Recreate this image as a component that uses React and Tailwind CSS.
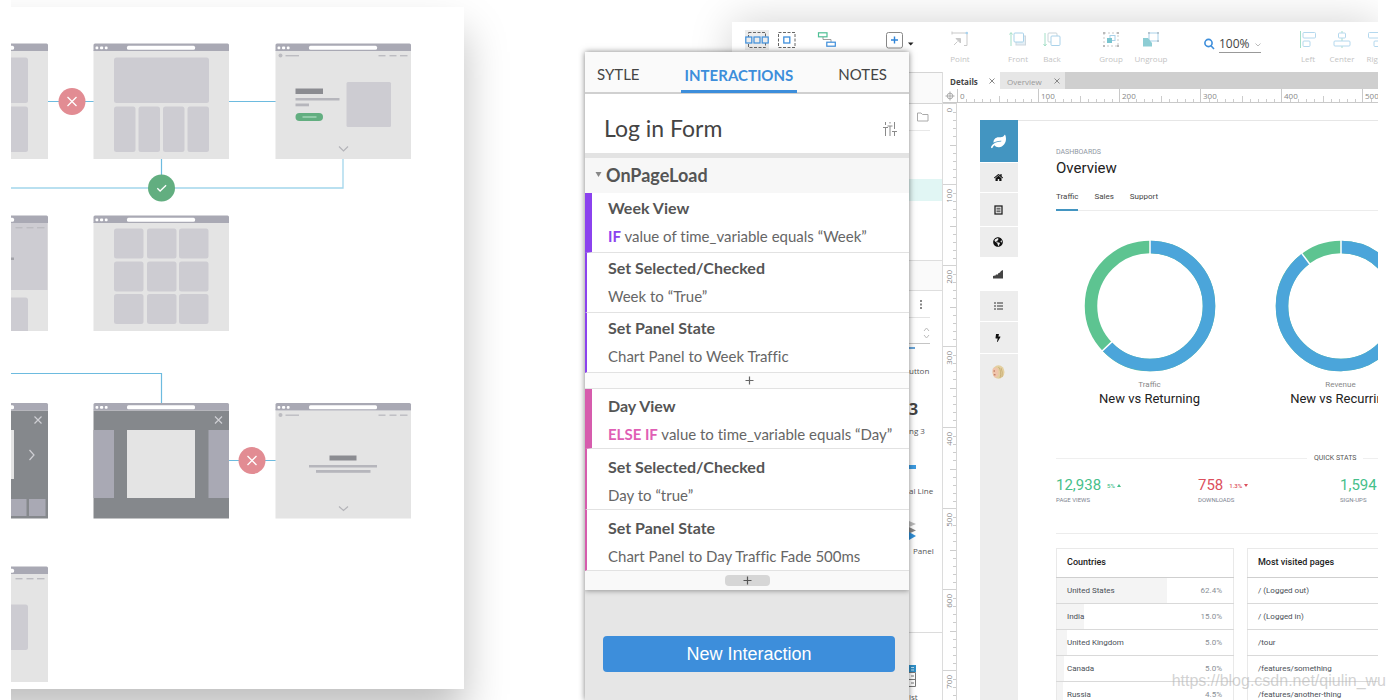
import React from "react";
import { FaLeaf, FaHome, FaGlobeAmericas, FaBolt } from "react-icons/fa";

/* ---------- Site flow diagram ---------- */

const BAR = "#a9a9b4";
const BLOCK = "#cdccd2";
const LINE = "#6dbbdf";

function Frame({ x, y, dark, children }) {
  return (
    <g transform={`translate(${x} ${y})`}>
      <path d="M0 7V1.5Q0 0 1.5 0H134Q135.500 0 135.500 1.500V7Z" fill={BAR} />
      <rect y="7.500" width="135.500" height="108" fill={dark ? "#85888c" : "#e4e4e4"} />
      <rect y="6.500" width="135.500" height="1" fill={BAR} />
      <rect x="2" y="3" width="2.800" height="2.800" rx="1" fill="#fff" />
      <rect x="6.500" y="3" width="3.200" height="2.800" rx="1" fill="#fff" />
      <rect x="11.300" y="3" width="2.800" height="2.800" rx="1" fill="#fff" />
      <rect x="33.500" y="2.200" width="68" height="4" rx="1.500" fill="#fff" />
      {children}
    </g>
  );
}

function Block({ x, y, w, h, fill = BLOCK, r = 2.5 }) {
  return <rect x={x} y={y} width={w} height={h} rx={r} fill={fill} />;
}

function NavLines({ brand }) {
  return (
    <g fill="#bcbcc1">
      {brand && <circle cx="5" cy="12" r="2" />}
      {brand && <rect x="10" y="11.500" width="13.500" height="1.400" />}
      <rect x="103" y="11.500" width="7" height="1.400" />
      <rect x="114" y="11.500" width="7" height="1.400" />
      <rect x="124.500" y="11.500" width="7.500" height="1.400" />
    </g>
  );
}

function Mark({ cx, cy, ok }) {
  return (
    <g transform={`translate(${cx} ${cy})`}>
      <circle r="13.500" fill={ok ? "#62ae80" : "#e28c93"} />
      <path
        d={ok ? "M-4.200 .300L-1.400 3L4.600-2.800" : "M-4.500-4.500L4.500 4.500M4.500-4.500L-4.500 4.500"}
        stroke="#fff"
        strokeWidth="1.300"
        fill="none"
      />
    </g>
  );
}

function FlowDiagram() {
  const cols = [20.5, 53.5, 85.5];
  const rows = [13, 46, 78.5];
  return (
    <svg width="513" height="682" viewBox="-49 7 513 682" role="img" aria-label="Site flow" className="block">
      <g fill="none" stroke={LINE} strokeWidth="1.200">
        <path d="M48 101.500H94M229 101.500H276M161.500 158V188" />
        <path d="M11 188H343V158" stroke="#a3d6ec" strokeWidth="1.300" />
        <path d="M11 373.500H161.500V404M229 460.500H276" />
      </g>

      <Frame x={-87.5} y={43.5}>
        <Block x={20} y={14} w={95.5} h={45.5} />
        <Block x={20} y={63} w={95.5} h={45.5} />
      </Frame>
      <Frame x={93.5} y={43.5}>
        <Block x={20.5} y={14} w={95} h={45.5} />
        <Block x={20.5} y={63} w={21.5} h={45.5} />
        <Block x={45} y={63} w={21.5} h={45.5} />
        <Block x={69.5} y={63} w={21.5} h={45.5} />
        <Block x={94} y={63} w={21.5} h={45.5} />
      </Frame>
      <Frame x={275.5} y={43.5}>
        <NavLines brand />
        <Block x={20} y={45} w={27.5} h={5.5} r={0} fill="#8b8c91" />
        <Block x={20} y={54.500} w={44} h={2.5} r={0} fill="#b6b6bc" />
        <Block x={20} y={60} w={13.5} h={2.8} r={0} fill="#b6b6bc" />
        <Block x={20} y={69.500} w={27.5} h={8} r={4} fill="#62ae80" />
        <Block x={27} y={72.800} w={14} h={1.4} r={0} fill="#a5d8b9" />
        <Block x={71} y={38.500} w={44.500} h={45} r={1.5} />
        <path d="M63.500 103L68 107.500L72.500 103" fill="none" stroke="#b4b4b9" strokeWidth="1.200" />
      </Frame>

      <Frame x={-87.5} y={215.5}>
        <Block x={0} y={7.5} w={135} h={67} r={0} />
        <NavLines />
        <Block x={70} y={42} w={31.5} h={2.5} r={0} fill="#a2a2a8" />
        <path d="M20 115.500V84Q20 82 22 82H113Q115.500 82 115.500 84.500V115.500Z" fill={BLOCK} />
      </Frame>
      <Frame x={93.5} y={215.5}>
        {rows.map((y) => cols.map((x) => <Block key={`${x}-${y}`} x={x} y={y} w={29.5} h={30} />))}
      </Frame>

      <Frame x={-87.5} y={403} dark>
        <Block x={33.500} y={27} w={68} h={49} r={0} fill="#e4e4e4" />
        <Block x={92} y={96} w={22} h={17} r={0} fill={BAR} />
        <Block x={116.500} y={96} w={16.500} h={17} r={0} fill={BAR} />
        <path d="M122 13.500L129 20.500M129 13.500L122 20.500M117 47L121.500 52L117 57" fill="none" stroke="#cfcfd4" strokeWidth="1.200" />
      </Frame>
      <Frame x={93.5} y={403} dark>
        <Block x={0} y={27} w={20.500} h={68} r={0} fill={BAR} />
        <Block x={33.500} y={27} w={68} h={68} r={0} fill="#e4e4e4" />
        <Block x={115} y={27} w={20.500} h={68} r={0} fill={BAR} />
        <path d="M121.500 13.500L128.500 20.500M128.500 13.500L121.500 20.500" stroke="#cfcfd4" strokeWidth="1.200" />
      </Frame>
      <Frame x={275.5} y={403}>
        <NavLines brand />
        <Block x={54} y={52.500} w={27} h={5} r={0} fill="#8b8c91" />
        <Block x={33.500} y={62} w={68} h={2.5} r={0} fill="#b6b6bc" />
        <Block x={40.500} y={67} w={54.500} h={2.8} r={0} fill="#b6b6bc" />
        <path d="M63.500 103.500L68 107.500L72.500 103.500" fill="none" stroke="#b4b4b9" strokeWidth="1.200" />
      </Frame>

      <Frame x={-87.5} y={566.5}>
        <NavLines />
        <Block x={20} y={38} w={95.5} h={45.5} />
      </Frame>

      <Mark cx={72} cy={101.500} />
      <Mark cx={161.500} cy={188} ok />
      <Mark cx={252} cy={460.500} />
    </svg>
  );
}

/* ---------- Design tool: toolbar ---------- */

function ToolButton({ label, children, wide }) {
  return (
    <button
      className={`flex shrink-0 flex-col items-center gap-[7px] text-[8px] leading-[8px] text-[#c4c4c4] ${wide ? "w-10" : "w-[34px]"}`}
    >
      <svg width="20" height="18" viewBox="0 0 20 18" fill="none" strokeWidth="1" aria-hidden="true">
        {children}
      </svg>
      {label}
    </button>
  );
}

function Toolbar() {
  return (
    <div className="flex h-[50px] shrink-0 items-start overflow-hidden bg-white pl-[13px] pt-2">
      <button aria-label="Select intersecting" className="shrink-0 bg-[#ececec]">
        <svg width="24" height="20" viewBox="0 0 24 20" fill="none">
          <rect x="3.500" y="2.500" width="17" height="15" stroke="#666" strokeDasharray="3 1.500" />
          <g stroke="#3d8edb" fill="#ececec" strokeWidth="1.200">
            <rect x=".800" y="7" width="6" height="6" />
            <rect x="9" y="7" width="6" height="6" />
            <rect x="17.200" y="7" width="6" height="6" />
          </g>
        </svg>
      </button>
      <button aria-label="Select contained" className="ml-2 shrink-0">
        <svg width="20" height="20" viewBox="0 0 20 20" fill="none">
          <rect x="1.500" y="2.500" width="16.500" height="15" stroke="#666" strokeDasharray="3 1.500" />
          <rect x="6.800" y="7" width="6" height="6" stroke="#3d8edb" strokeWidth="1.300" />
        </svg>
      </button>
      <button aria-label="Connect" className="ml-5 shrink-0">
        <svg width="20" height="20" viewBox="0 0 20 20" fill="none">
          <rect x="1.500" y="2.800" width="8.500" height="4" stroke="#4fbf95" strokeWidth="1.200" />
          <path d="M6 7V9.500H14V12" stroke="#888" strokeWidth=".800" />
          <rect x="9.800" y="12.200" width="8.500" height="4" stroke="#3d8edb" strokeWidth="1.200" />
        </svg>
      </button>
      <button aria-label="Insert" className="ml-12 flex shrink-0 items-center gap-[3px]">
        <svg width="20" height="20" viewBox="0 0 20 20" fill="none">
          <rect x="1.500" y="2.500" width="16" height="15.500" rx="2" stroke="#888" />
          <path d="M6 10H13M9.500 6.500V13.500" stroke="#2f84d8" strokeWidth="1.400" />
        </svg>
        <svg width="6" height="12" viewBox="0 0 6 12">
          <path d="M0 8.500H5.500L2.700 11.500Z" fill="#222" />
        </svg>
      </button>
      <div className="flex pl-[29px]">
        <ToolButton label="Point">
          <path d="M2 3H17M17 3V15.500H14M2 1.500V4.500" stroke="#c9c9c9" />
          <path d="M4 15L7.500 11.500M6 8.500H10.500V13Z" fill="#c9c9c9" stroke="#c9c9c9" />
          <circle cx="16.800" cy="3" r="1.300" fill="#a8d3f0" />
        </ToolButton>
      </div>
      <div className="flex pl-6">
        <ToolButton label="Front">
          <path d="M3 16V3M1.500 4.500L3 2.500L4.500 4.500" stroke="#a5dfc8" />
          <rect x="8" y="6" width="9.500" height="9" fill="#e3eef5" stroke="#cfd8de" />
          <rect x="6" y="3" width="9.500" height="9" rx="1" fill="#fff" stroke="#a9d2ea" />
        </ToolButton>
        <ToolButton label="Back">
          <path d="M3 3V16M1.500 14L3 16L4.500 14" stroke="#a5dfc8" />
          <rect x="6" y="3" width="9" height="9" rx="1" stroke="#c9d3d8" />
          <rect x="9" y="6" width="9" height="9.500" rx="1" fill="#fff" stroke="#a9d2ea" />
        </ToolButton>
      </div>
      <div className="flex pl-[22px]">
        <ToolButton label="Group" wide>
          <rect x="3" y="3" width="14" height="13" stroke="#c9c9c9" strokeDasharray="2 2" />
          <path d="M2 2H4V4H2ZM16 2H18V4H16ZM2 15H4V17H2ZM16 15H18V17H16Z" fill="#bbb" />
          <rect x="9" y="5.500" width="5" height="5" stroke="#a9d2ea" />
          <rect x="6" y="8" width="5" height="5" fill="#79c5cf" />
        </ToolButton>
        <ToolButton label="Ungroup" wide>
          <rect x="8" y="3" width="9" height="8" stroke="#a9d2ea" />
          <path d="M2 8L7 8L11 13V16.500H2Z" fill="#8dcdd4" />
          <path d="M7 2H9V4H7ZM16 2H18V4H16ZM16 10H18V12H16Z" fill="#b5c5d0" />
        </ToolButton>
      </div>
      <div className="flex shrink-0 items-center pl-8 pt-[5px]">
        <svg width="12" height="12" viewBox="0 0 12 12" fill="none" stroke="#3d8edb" strokeWidth="1.600" className="mr-1">
          <circle cx="5.500" cy="5" r="3.600" />
          <path d="M8 7.800L11 11" />
        </svg>
        <div className="relative flex items-center border-b border-[#999]">
          <select
            aria-label="Zoom"
            className="w-[42px] appearance-none bg-transparent text-[12px] leading-[17px] text-[#444]"
            defaultValue="100"
          >
            <option value="100">100%</option>
          </select>
          <svg width="6" height="4" viewBox="0 0 6 4" fill="none" stroke="#bbb" className="pointer-events-none absolute right-0 top-2">
            <path d="M.500 .500L3 3L5.500 .500" />
          </svg>
        </div>
      </div>
      <div className="flex shrink-0 pl-[30px]">
        <ToolButton label="Left">
          <path d="M2.500 1V18" stroke="#a5dfc8" />
          <rect x="5" y="2.500" width="12.500" height="5.500" rx="1" stroke="#b4d8ee" />
          <rect x="5" y="11" width="7" height="5.500" rx="1" stroke="#b4d8ee" />
        </ToolButton>
        <ToolButton label="Center">
          <path d="M10 1V18" stroke="#a5dfc8" />
          <rect x="6.500" y="3" width="7" height="5" rx="1" fill="#fff" stroke="#b4d8ee" />
          <rect x="2" y="11" width="16" height="5" rx="1" fill="#fff" stroke="#b4d8ee" />
        </ToolButton>
        <ToolButton label="Right">
          <rect x="2.500" y="2.500" width="14" height="5.500" rx="1" stroke="#b4d8ee" />
          <rect x="8" y="11" width="8" height="5.500" rx="1" stroke="#b4d8ee" />
        </ToolButton>
      </div>
    </div>
  );
}

/* ---------- Design tool: left sidebar ---------- */

function Sidebar() {
  return (
    <aside className="flex w-[211px] shrink-0 flex-col overflow-hidden border-r border-[#dcdcdc] bg-white pl-[177px] text-[8px] leading-3 text-[#555]">
      <div className="h-8 shrink-0 border-b border-t border-[#d5d5d5] bg-[#fafafa]" />
      <div className="mr-3 flex h-[27px] shrink-0 items-center border-b border-[#e8e8e8] pl-2">
        <svg width="12" height="10" viewBox="0 0 12 10" fill="none" stroke="#aaa">
          <path d="M.500 9V1H4L5.500 2.500H11V9Z" />
        </svg>
      </div>
      <div className="mt-12 h-[22px] shrink-0 bg-[#e1f6f4]" />
      <div className="mt-[59px] h-[31px] shrink-0 border-b border-t border-[#dedede] bg-[#fafafa]" />
      <div className="mr-3 flex h-[27px] shrink-0 items-center justify-center border-b border-[#e4e4e4] pl-1">
        <svg width="3" height="9" viewBox="0 0 3 9" fill="#888">
          <path d="M0 0H2V2H0ZM0 3.500H2V5.500H0ZM0 7H2V9H0Z" />
        </svg>
      </div>
      <div className="mr-3 flex h-[26px] shrink-0 items-center justify-end border-b border-[#c5c5c5] pt-1">
        <svg width="7" height="12" viewBox="0 0 7 12" fill="none" stroke="#bbb">
          <path d="M1 4L3.500 1L6 4M1 8L3.500 11L6 8" />
        </svg>
      </div>
      <div className="mt-[3px] h-[2px] w-[6px] shrink-0 bg-[#6aa5d8]" />
      <div className="mt-4">utton</div>
      <div className="mt-5 text-[16px] font-bold leading-6 text-[#444]">3</div>
      <div className="mt-1">ng 3</div>
      <div className="mt-7 h-1 w-[7px] shrink-0 bg-[#3d9be0]" />
      <div className="mt-4">al Line</div>
      <svg width="8" height="20" viewBox="0 0 8 20" className="mt-6 shrink-0">
        <path d="M0 0L7 3L0 6Z" fill="#bbb" />
        <path d="M0 6L7 9.500L0 12.500Z" fill="#888" />
        <path d="M0 11L7 15L0 19Z" fill="#3090d8" />
      </svg>
      <div className="mt-1 pl-1">Panel</div>
      <div className="mt-[75px] border-t border-[#dcdcdc] pt-8">
        <svg width="8" height="22" viewBox="0 0 8 22" fill="none">
          <path d="M0 0H7V7H0Z" fill="#3090c8" />
          <path d="M2 2.500H5M2 5H5" stroke="#bfe0f2" />
          <path d="M0 7.500H6.500V21.500H0M0 14.500H6.500M2 11H5M2 18H5" stroke="#777" />
        </svg>
        <div className="mt-1">ist</div>
      </div>
    </aside>
  );
}

/* ---------- Design tool: rulers ---------- */

const TICKS = [8, 16, 24, 32, 41, 49, 57, 65, 73];

function RulerX() {
  return (
    <div className="flex h-[14px] shrink-0 overflow-hidden border-b border-[#c9c9c9] bg-white text-[8px] leading-[14px] text-[#888]">
      <svg width="14" height="13" viewBox="0 0 14 13" fill="none" stroke="#aaa" className="shrink-0">
        <circle cx="7" cy="7" r="2.800" />
        <path d="M7 2.500V11.500M2.500 7H11.500" />
      </svg>
      {[0, 100, 200, 300, 400, 500].map((n) => (
        <div key={n} className="relative w-[81px] shrink-0 border-l border-[#c9c9c9] pl-[2px]">
          {n}
          <svg width="81" height="13" viewBox="0 0 81 13" className="absolute left-0 top-0" stroke="#ccc">
            {TICKS.map((t) => (
              <path key={t} d={`M${t}.5 ${t === 41 ? 7 : 10}V13`} />
            ))}
          </svg>
        </div>
      ))}
    </div>
  );
}

function RulerY() {
  return (
    <div className="flex w-[14px] shrink-0 flex-col overflow-hidden border-r border-[#d6d6d6] bg-white text-[8px] leading-[12px] text-[#888]">
      {[0, 100, 200, 300, 400, 500, 600, 700].map((n) => (
        <div key={n} className="relative h-[81px] shrink-0 border-t border-[#d3d3d3] pt-1">
          <span className="block rotate-180 [writing-mode:vertical-rl]">{n}</span>
          <svg width="13" height="81" viewBox="0 0 13 81" className="absolute left-0 top-0" stroke="#ccc">
            {TICKS.map((t) => (
              <path key={t} d={`M${t === 41 ? 7 : 10} ${t}.5H13`} />
            ))}
          </svg>
        </div>
      ))}
    </div>
  );
}

/* ---------- Dashboard page on the canvas ---------- */

function DashboardNav() {
  const cell = "flex w-full shrink-0 items-center justify-center border-b border-white pr-[2px] text-[#111]";
  return (
    <nav aria-label="Dashboard" className="flex w-[38px] shrink-0 flex-col bg-[#ededed]">
      <a href="#logo" aria-label="Logo" className={`${cell} h-[43px] bg-[#4395c1]`}>
        <FaLeaf size={15} color="#fff" />
      </a>
      <a href="#home" aria-label="Home" className={`${cell} h-[30px]`}>
        <FaHome size={9} />
      </a>
      <a href="#reports" aria-label="Reports" className={`${cell} h-[34px]`}>
        <svg width="9" height="10" viewBox="0 0 9 10" fill="none" stroke="#222">
          <rect x="1" y="1" width="7" height="8" strokeWidth="1.300" />
          <path d="M2.500 3.300H6.500M2.500 5H6.500M2.500 6.700H6.500" strokeWidth=".800" />
        </svg>
      </a>
      <a href="#world" aria-label="World" className={`${cell} h-[31px]`}>
        <FaGlobeAmericas size={10} />
      </a>
      <a href="#stats" aria-label="Stats" className={`${cell} h-[33px] bg-white`}>
        <svg width="10" height="9" viewBox="0 0 10 9" fill="#444">
          <path d="M0 8.500V6L2 5.500V6L3 4.500H5V3.500L7 2.500L8 1L10 0V8.500Z" />
        </svg>
      </a>
      <a href="#list" aria-label="List" className={`${cell} h-[31px]`}>
        <svg width="9" height="8" viewBox="0 0 9 8" stroke="#333">
          <path d="M0 1H2M3 1H9M0 4H2M3 4H9M0 7H2M3 7H9" />
        </svg>
      </a>
      <a href="#activity" aria-label="Activity" className={`${cell} h-8`}>
        <FaBolt size={8} />
      </a>
      <a href="#profile" aria-label="Profile" className="flex h-9 shrink-0 items-center justify-center pr-[2px]">
        <svg width="14" height="14" viewBox="0 0 14 14">
          <ellipse cx="7.500" cy="7" rx="6" ry="6.800" fill="#e3cf9f" />
          <path d="M1.500 4Q5 1 7.500 4.500V10Q5 14 3 12Q1 8 1.500 4Z" fill="#efc5ac" />
          <path d="M7.500 2Q11 6 9 13M10 3Q12 7 11 12" fill="none" stroke="#c0a468" strokeWidth=".700" />
          <path d="M2.500 6H4M2.800 9.800H4.500" stroke="#b0604a" />
        </svg>
      </a>
    </nav>
  );
}

function Donut({ share, caption, title }) {
  const r = 59;
  const c = 2 * Math.PI * r;
  const end = share * 2 * Math.PI;
  const gapLine = (a) =>
    `M${66 + 52 * Math.sin(a)} ${66 - 52 * Math.cos(a)}L${66 + 66 * Math.sin(a)} ${66 - 66 * Math.cos(a)}`;
  return (
    <figure className="flex w-[191px] shrink-0 flex-col items-center">
      <svg width="132" height="132" viewBox="0 0 132 132" fill="none" strokeWidth="12.500">
        <circle cx="66" cy="66" r={r} stroke="#5dc491" />
        <circle cx="66" cy="66" r={r} stroke="#4ba5da" strokeDasharray={`${share * c} ${c}`} transform="rotate(-90 66 66)" />
        <path d={gapLine(0) + gapLine(end)} stroke="#fff" strokeWidth="1.500" />
      </svg>
      <figcaption className="flex flex-col items-center whitespace-nowrap pt-2">
        <span className="text-[8px] leading-[10px] text-[#888]">{caption}</span>
        <span className="text-[13px] leading-[18px] text-[#222]">{title}</span>
      </figcaption>
    </figure>
  );
}

function Stat({ value, delta, label, down }) {
  return (
    <div className="w-[142px] shrink-0">
      <div className={`flex items-center gap-[6px] ${down ? "text-[#dc4f5c]" : "text-[#46c08a]"}`}>
        <span className="text-[15px] leading-5">{value}</span>
        {delta && (
          <span className="flex items-center gap-[2px] text-[6px] font-medium">
            {delta}
            <svg width="4" height="3" viewBox="0 0 4 3" fill="currentColor">
              <path d={down ? "M0 0H4L2 3Z" : "M0 3H4L2 0Z"} />
            </svg>
          </span>
        )}
      </div>
      <div className="text-[6px] leading-[10px] text-[#7c8490]">{label}</div>
    </div>
  );
}

const COUNTRIES = [
  ["United States", "62.4%", 62.4],
  ["India", "15.0%", 15],
  ["United Kingdom", "5.0%", 5.5],
  ["Canada", "5.0%", 4],
  ["Russia", "4.5%", 3.5],
];
const PAGES = ["/ (Logged out)", "/ (Logged in)", "/tour", "/features/something", "/features/another-thing"];

function Tables() {
  const th = "h-[29px] border-b border-[#cfcfcf] text-left text-[9px] font-medium text-[#222]";
  const row = "h-[26px] border-b border-[#d9d9d9]";
  return (
    <div className="flex gap-[13px] text-[8px] text-[#4a4f57]">
      <table className="w-[178px] shrink-0 border-collapse border border-[#e9e9e9]">
        <thead>
          <tr>
            <th colSpan="2" className={`${th} pl-[10px]`}>Countries</th>
          </tr>
        </thead>
        <tbody>
          {COUNTRIES.map(([name, pct, w]) => (
            <tr
              key={name}
              className={row}
              style={{ background: `linear-gradient(to right, #f4f4f4 ${w}%, transparent ${w}%)` }}
            >
              <td className="pl-[10px]">{name}</td>
              <td className="pr-[11px] text-right text-[#8a8f96]">{pct}</td>
            </tr>
          ))}
        </tbody>
      </table>
      <table className="w-[178px] shrink-0 border-collapse border border-[#e9e9e9]">
        <thead>
          <tr>
            <th className={`${th} pl-[10px]`}>Most visited pages</th>
          </tr>
        </thead>
        <tbody>
          {PAGES.map((p) => (
            <tr key={p} className={row}>
              <td className="pl-[10px]">{p}</td>
            </tr>
          ))}
        </tbody>
      </table>
    </div>
  );
}

function Dashboard() {
  return (
    <div className="ml-[23px] mt-[17px] flex min-w-0 flex-1 overflow-hidden font-[Roboto,sans-serif]">
      <DashboardNav />
      <div className="min-w-0 flex-1 overflow-hidden border-t border-[#e6e6e6] pl-[38px] pt-[26px]">
        <div className="text-[7px] leading-[10px] text-[#8f97a3]">DASHBOARDS</div>
        <h1 className="text-[15px] leading-[22px] text-[#222]">Overview</h1>
        <div className="mt-[10px] flex gap-4 border-b border-[#ececec] text-[8px] leading-4 text-[#444]">
          <a href="#traffic" className="-mb-px border-b-2 border-[#4395c1] pb-1">Traffic</a>
          <a href="#sales">Sales</a>
          <a href="#support">Support</a>
        </div>
        <div className="-ml-[2px] mt-[29px] flex">
          <Donut share={0.63} caption="Traffic" title="New vs Returning" />
          <Donut share={0.898} caption="Revenue" title="New vs Recurring" />
        </div>
        <div className="mt-[45px] flex items-center gap-[7px] text-[7px] leading-[10px] text-[#555]">
          <span className="h-px w-[251px] shrink-0 bg-[#efefef]" />
          <span className="shrink-0">QUICK STATS</span>
          <span className="h-px flex-1 bg-[#efefef]" />
        </div>
        <div className="mt-3 flex border-b border-[#ececec] pb-[28px]">
          <Stat value="12,938" delta="5%" label="PAGE VIEWS" />
          <Stat value="758" delta="1.3%" label="DOWNLOADS" down />
          <Stat value="1,594" label="SIGN-UPS" />
        </div>
        <div className="mt-[14px]">
          <Tables />
        </div>
      </div>
    </div>
  );
}

function DesignTool() {
  return (
    <div className="flex min-w-0 flex-1 flex-col bg-white shadow-[0_0_40px_rgba(0,0,0,0.18)]">
      <Toolbar />
      <div className="flex min-h-0 flex-1">
        <Sidebar />
        <div className="flex min-w-0 flex-1 flex-col">
          <div className="flex h-[17px] shrink-0 overflow-hidden bg-[#cfcfcf] text-[8px] leading-[17px]">
            <button className="flex w-[57px] shrink-0 items-center justify-between bg-white pl-[7px] pr-[5px] pt-px font-bold text-[#444]">
              Details
              <svg width="6" height="6" viewBox="0 0 6 6" stroke="#888"><path d="M.500 .500L5.500 5.500M5.500 .500L.500 5.500" /></svg>
            </button>
            <button className="flex w-[65px] shrink-0 items-center justify-between bg-[#e6e6e6] pl-[7px] pr-[5px] pt-px text-[#999]">
              Overview
              <svg width="6" height="6" viewBox="0 0 6 6" stroke="#888"><path d="M.500 .500L5.500 5.500M5.500 .500L.500 5.500" /></svg>
            </button>
          </div>
          <RulerX />
          <div className="flex min-h-0 flex-1">
            <RulerY />
            <Dashboard />
          </div>
        </div>
      </div>
    </div>
  );
}

/* ---------- Interactions panel ---------- */

function Step({ title, children, head, tone }) {
  const bar =
    tone === "week"
      ? head ? "border-l-[7px] border-l-[#8b42ee] pl-4" : "border-l-2 border-l-[#8b42ee] pl-[21px]"
      : head ? "border-l-[7px] border-l-[#d65cad] pl-4" : "border-l-2 border-l-[#d65cad] pl-[21px]";
  const pad = tone === "week" ? "pt-px pb-[2px]" : head ? "pt-[3px]" : "pt-1";
  return (
    <div className={`border-b border-b-[#e2e2e2] bg-white ${bar} ${pad}`}>
      <h3 className="text-[16px] font-bold leading-7 text-[#555]">{title}</h3>
      <p className="whitespace-nowrap leading-7">{children}</p>
    </div>
  );
}

function InteractionsPanel() {
  return (
    <section
      aria-label="Interactions"
      className="absolute bottom-0 left-[7px] top-[52px] w-[324px] overflow-hidden bg-[#e6e6e6] font-[Lato,sans-serif] text-[15px] text-[#666] shadow-[0_0_6px_rgba(0,0,0,0.5)] [font-variant-ligatures:none]"
    >
      <div className="shadow-[0_1px_5px_rgba(0,0,0,0.35)]">
        <div className="flex h-[42px] items-stretch justify-between border-b-2 border-[#d0d0d0] bg-[#fafafa] pl-3 pr-[22px] text-[15px] text-[#444]">
          <button className="pt-[5px]">SYTLE</button>
          <button className="-mb-px border-b-[3px] border-[#3d8edb] px-1 pt-2 font-bold text-[#3d8edb]">INTERACTIONS</button>
          <button className="pt-[5px]">NOTES</button>
        </div>
        <div className="flex h-[64px] items-center justify-between border-b-[5px] border-[#e3e3e3] bg-white pl-[19px] pr-3 pt-[10px]">
          <h2 className="text-[23px] text-[#444]">Log in Form</h2>
          <button aria-label="Adjust">
            <svg width="14" height="14" viewBox="0 0 14 14" fill="none" stroke="#8a8a8a">
              <path d="M2.500 0V3M0 5.500H5M2.500 5.500V14M7 0V1.500M4.500 4H9.500M7 4V14M11.500 0V7M9 9.500H14M11.500 9.500V14" />
            </svg>
          </button>
        </div>
        <h2 className="flex h-[35px] items-center gap-1 bg-[#f7f7f7] pl-[10px] text-[18px] font-bold text-[#555]">
          <svg width="7" height="9" viewBox="0 0 7 9" fill="#888"><path d="M.500 1H6.500L3.500 6Z" /></svg>
          OnPageLoad
        </h2>
        <Step tone="week" head title="Week View">
          <b className="text-[#8b42ee]">IF</b> value of time_variable equals “Week”
        </Step>
        <Step tone="week" title="Set Selected/Checked">Week to “True”</Step>
        <Step tone="week" title="Set Panel State">Chart Panel to Week Traffic</Step>
        <button aria-label="Add action" className="flex h-4 w-full items-center justify-center border-b border-[#e2e2e2] bg-[#fcfcfc] pl-1">
          <svg width="9" height="9" viewBox="0 0 9 9" stroke="#666" strokeWidth="1.200"><path d="M.500 4.500H8.500M4.500 .500V8.500" /></svg>
        </button>
        <Step tone="day" head title="Day View">
          <b className="text-[#e05fb5]">ELSE IF</b> value to time_variable equals “Day”
        </Step>
        <Step tone="day" title="Set Selected/Checked">Day to “true”</Step>
        <Step tone="day" title="Set Panel State">Chart Panel to Day Traffic Fade 500ms</Step>
        <div className="flex h-[19px] items-center justify-center bg-[#f9f9f9]">
          <button aria-label="Add case" className="flex h-[11px] w-[45px] items-center justify-center rounded-sm bg-[#d6d6d6]">
            <svg width="9" height="9" viewBox="0 0 9 9" stroke="#555" strokeWidth="1.200"><path d="M.500 4.500H8.500M4.500 .500V8.500" /></svg>
          </button>
        </div>
      </div>
      <div className="pl-[18px] pr-[14px] pt-[46px]">
        <button className="h-9 w-full rounded-sm bg-[#3d8edb] font-['Liberation_Sans',sans-serif] text-[18px] text-white">
          New Interaction
        </button>
      </div>
    </section>
  );
}

export default function App() {
  return (
    <main className="relative flex h-screen gap-[56px] overflow-hidden bg-white pl-[11px] pr-4 font-['Open_Sans',sans-serif]">
      <div className="w-[511px] shrink-0 overflow-hidden pt-[7px]">
        <div className="-ml-[60px] w-[513px] bg-white shadow-[0_25px_40px_rgba(0,0,0,0.25)]">
          <FlowDiagram />
        </div>
      </div>
      <div className="relative flex min-w-0 flex-1 overflow-hidden pl-[154px] pt-[22px]">
        <DesignTool />
        <InteractionsPanel />
      </div>
      <p className="pointer-events-none absolute bottom-2 right-2 font-['Liberation_Sans',sans-serif] text-[16px] leading-[22px] text-[#b4b4b4]/60">
        https://blog.csdn.net/qiulin_wu
      </p>
    </main>
  );
}
